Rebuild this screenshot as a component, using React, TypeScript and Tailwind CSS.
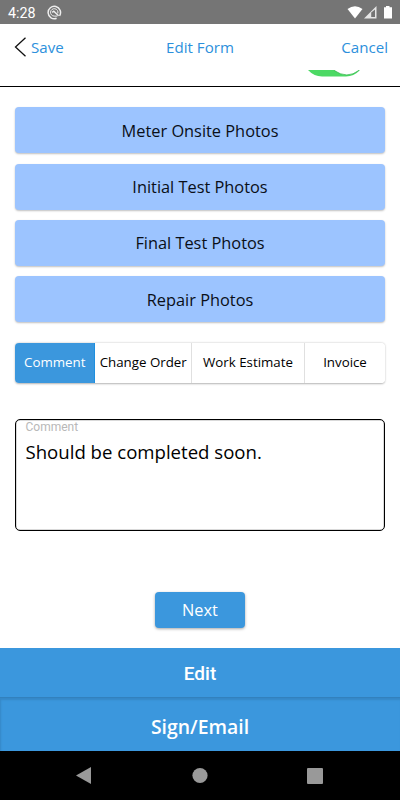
import React, { useState } from 'react';
import clsx from 'clsx';

const photoSections = ['Meter Onsite Photos', 'Initial Test Photos', 'Final Test Photos', 'Repair Photos'];

const tabs = [
  { name: 'Comment', width: 'w-[80.4px]' },
  { name: 'Change Order', width: 'w-[96.6px]' },
  { name: 'Work Estimate', width: 'w-[113px]' },
  { name: 'Invoice', width: 'w-[80px]' },
];

function StatusBar() {
  return (
    <div className="flex h-6 shrink-0 items-center bg-[#757575] pl-2 pr-[7px] text-white">
      <span className="w-[39px] pt-px font-[Roboto,sans-serif] text-[14.3px] leading-6">4:28</span>
      <svg className="h-[15px] w-[15px]" viewBox="0 0 15 15" fill="none" stroke="#eeeeee">
        <path d="M9.6 13.3A6.2 6.2 0 1 1 12.6 10.8" strokeWidth="1.5" />
        <path d="M10.8 8.4A3.7 3.7 0 1 0 7.2 11.1H10.4" strokeWidth="1" />
        <path d="M5.2 7.4 6.8 6.2 11.6 10.8" strokeWidth="1.4" />
      </svg>
      <svg className="ml-auto h-[13px] w-[46px]" viewBox="0 0 46 13">
        <path d="M.5 3Q8 -2.5 15.5 3L8 12.5Z" fill="#fff" />
        <path d="M29.5 0V12.5H17Z" fill="#e6e6e6" />
        <path d="M24.2 6.5 28 3.5V11H24.2Z" fill="#757575" />
        <path d="M37 1.2H39V0H42.5V1.2H45V12.5H37Z" fill="#fff" />
      </svg>
    </div>
  );
}

function Header() {
  return (
    <header className="flex h-[63px] shrink-0 flex-col border-b border-black">
      <div className="grid h-[46px] grid-cols-3 items-center text-[15.1px] text-[#2c90dc]">
        <button className="flex items-center pl-[14px] pt-px">
          <svg className="mr-[5px] h-5 w-3" viewBox="0 0 12 20" fill="none" stroke="#111">
            <path d="M11.5 .8 1.5 10 11.5 19.2" strokeWidth="1.3" />
          </svg>
          Save
        </button>
        <h1 className="pt-px text-center">Edit Form</h1>
        <button className="pr-3 pt-px text-right">Cancel</button>
      </div>
      {/* Lower edge of the switch scrolled under the header */}
      <svg className="ml-[308px] h-[7px] w-[52px]" viewBox="0 0 52 7">
        <path d="M0 0H52Q46 6.5 38 6.5H14Q6 6.5 0 0Z" fill="#4cd964" />
        <path d="M26 0H51Q39 10 26 0Z" fill="#fff" />
        <path d="M26 .4Q39 9.5 51 .4" fill="none" stroke="#38b950" strokeWidth=".8" />
      </svg>
    </header>
  );
}

export default function App() {
  const [activeTab, setActiveTab] = useState('Comment');
  const [comment, setComment] = useState('Should be completed soon.');

  return (
    <div className="flex h-[800px] w-[400px] flex-col overflow-hidden bg-white font-['Open_Sans',sans-serif] text-black">
      <StatusBar />
      <Header />

      <main className="flex flex-1 flex-col px-[15px] pt-[20.4px]">
        <div className="flex flex-col gap-[10.3px]">
          {photoSections.map((section) => (
            <button key={section} className="h-[46px] rounded-[4px] bg-[#9cc4ff] pt-px text-[16.35px] text-[#0a0f18] shadow-[0_1px_2px_rgba(0,0,0,0.25)]">
              {section}
            </button>
          ))}
        </div>

        <div className="mt-[20.7px] flex h-[40.5px] shrink-0 overflow-hidden rounded-[4px] shadow-[0_0.5px_2px_rgba(0,0,0,0.3)]">
          {tabs.map((tab) => (
            <button
              key={tab.name}
              onClick={() => setActiveTab(tab.name)}
              className={clsx(
                'whitespace-nowrap border-r text-[13.3px] last:border-r-0',
                tab.width,
                activeTab === tab.name ? 'border-[#1e8fdf] bg-[#3b97dd] text-white' : 'border-[#e0e0e0] bg-white',
              )}
            >
              {tab.name}
            </button>
          ))}
        </div>

        <label className="mt-[35.5px] flex h-[112px] shrink-0 flex-col rounded-[5px] border border-black px-[9.5px] shadow-[inset_0_0_0_0.5px_rgba(0,0,0,0.3)]">
          <span className="font-[Roboto,sans-serif] text-[12px] leading-[15px] text-[#b8b8b8]">Comment</span>
          <textarea
            value={comment}
            onChange={(e) => setComment(e.target.value)}
            className="mt-1 flex-1 resize-none text-[18.6px] leading-[26px] outline-none"
          />
        </label>

        <button className="mt-[61px] h-[36px] w-[90px] shrink-0 self-center rounded-[4px] bg-[#3b97dd] pt-px text-[16.35px] text-white shadow-[0_1px_3px_rgba(0,0,0,0.35)]">
          Next
        </button>
      </main>

      <footer className="shrink-0 text-white">
        <button className="block h-[50px] w-full border-b border-[#3281bd] bg-[#3b97dd] pt-[3px] font-[Roboto,sans-serif] text-[19px] font-medium">Edit</button>
        <button className="block h-[53px] w-full bg-[#3b97dd] pt-[5px] text-[19.4px] font-[560] shadow-[inset_1px_2px_2px_rgba(0,0,0,0.1)]">
          Sign/Email
        </button>
        <svg className="block h-[49px] w-full bg-black" viewBox="0 0 400 49" fill="#999">
          <path d="M76 24.5 91 16V33Z" />
          <circle cx="200" cy="24.5" r="7.6" />
          <rect x="307" y="17" width="16" height="16" rx="1" />
        </svg>
      </footer>
    </div>
  );
}
